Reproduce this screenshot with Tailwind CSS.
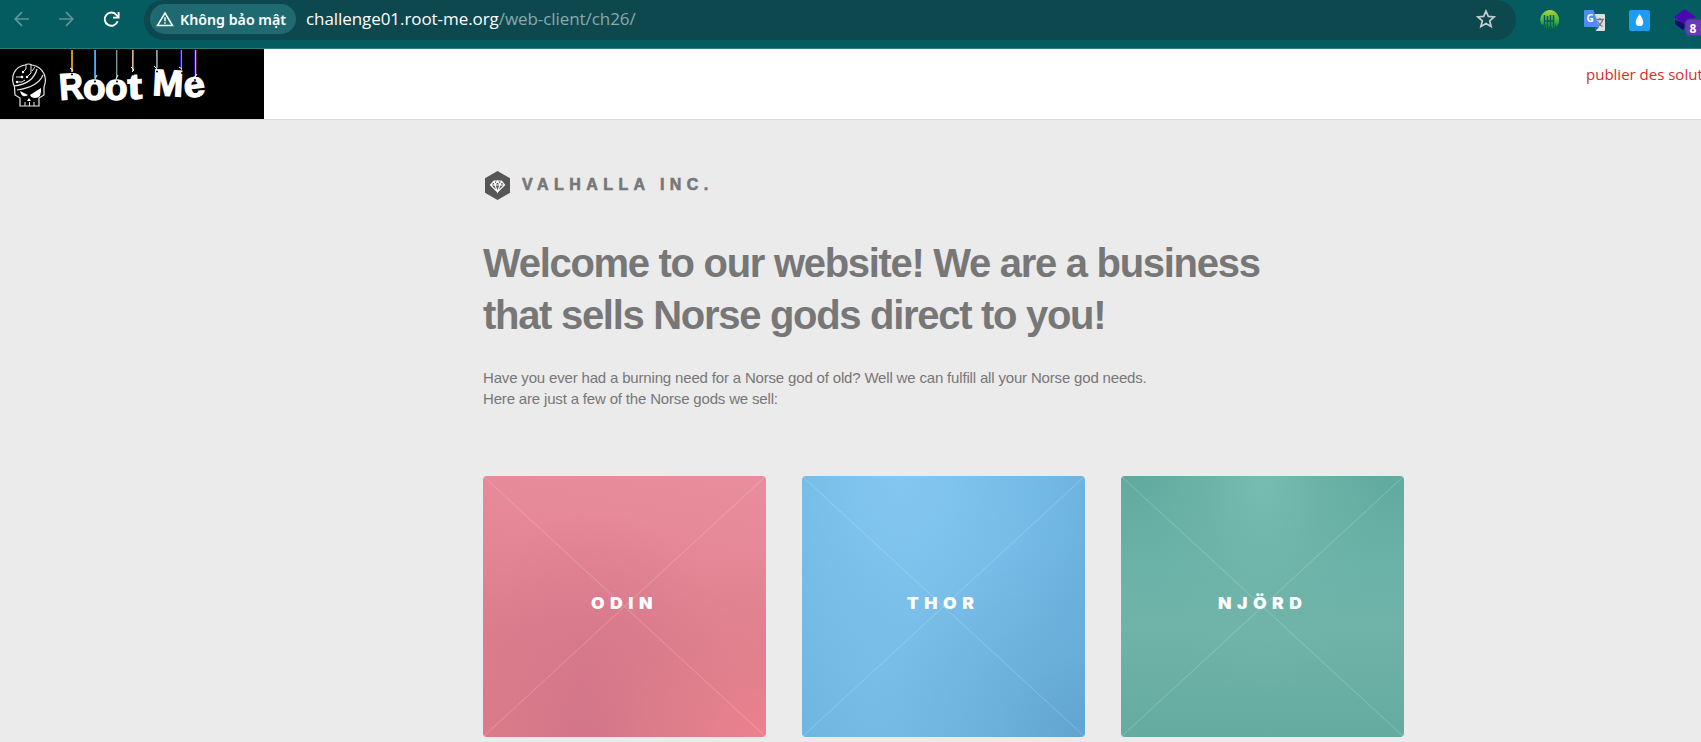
<!DOCTYPE html>
<html lang="vi">
<head>
<meta charset="utf-8">
<title>Valhalla Inc.</title>
<script src="https://cdn.jsdelivr.net/npm/@tailwindcss/browser@4"></script>
</head>
<body class="h-[742px] w-[1701px] overflow-hidden bg-[#ebebeb] font-['Liberation_Sans',sans-serif]">
<!-- Browser toolbar -->
<div class="flex h-[49px] w-full items-start overflow-hidden border-b border-[#33777c] bg-[#045c61]">
  <div class="flex h-[38px] w-[144px] shrink-0 items-center">
    <svg class="ml-[14px] h-4 w-4" viewBox="0 0 16 16" fill="none" stroke="#619396" stroke-width="1.7"><path d="M15 8H1.5M8 1.2 1.2 8 8 14.8"/></svg>
    <svg class="ml-[29px] h-4 w-4" viewBox="0 0 16 16" fill="none" stroke="#619396" stroke-width="1.7"><path d="M0 8h13.5M7 1.2 13.8 8 7 14.8"/></svg>
    <svg class="ml-[28px] h-[17px] w-[17px]" viewBox="0 0 17 17" fill="none" stroke="#fff" stroke-width="1.9"><path d="M14.6 10.2A6.6 6.6 0 1 1 13.6 4.2L15 6"/><path d="M15.6 1v5.6H10"/></svg>
  </div>
  <div class="flex h-10 w-[1372px] shrink-0 items-center rounded-r-[20px] rounded-l-[20px] bg-[#0e484f] pb-[2px] pl-[6px]">
    <div class="flex h-[30px] w-[146px] shrink-0 items-center rounded-full bg-[#1f6a70] pl-[6px]">
      <svg class="h-[16px] w-[18px]" viewBox="0 0 18 16" fill="none" stroke="#fff" stroke-width="1.5"><path d="M9 2 16.5 14.5h-15z"/><path d="M9 6.3v4M9 11.2v1.6"/></svg>
      <span class="ml-[6px] origin-left scale-x-[1.015] font-['Noto_Sans',sans-serif] text-[14px] font-semibold whitespace-nowrap text-white">Không bảo mật</span>
    </div>
    <div class="ml-[10px] font-['Open_Sans',sans-serif] text-[17px] tracking-[-0.07px] whitespace-nowrap text-white">challenge01.root-me.org<span class="text-[#8ba9ac]">/web-client/ch26/</span></div>
    <svg class="mr-[20px] ml-auto h-5 w-5" viewBox="0 0 20 20" fill="none" stroke="#c3cdcf" stroke-width="1.7"><path d="m10 2 2.3 5.4 5.9.5-4.5 3.9 1.4 5.7L10 14.5l-5.1 3 1.4-5.7L1.8 7.900l5.900-.5z"/></svg>
  </div>
  <div class="flex h-[40px] shrink-0 items-center">
    <svg class="ml-[23px] h-5 w-5" viewBox="0 0 20 20"><defs><linearGradient id="g" x2="0" y2="1"><stop stop-color="#b3d435"/><stop offset=".55" stop-color="#3db346"/><stop offset="1" stop-color="#087c38"/></linearGradient></defs><path fill="url(#g)" d="M10 0a10 10 0 0 1 8.500 15.500L17 17v-3l-2 4v-3l-2 4.500V16l-2 3.500V16l-2 3.500V16l-2 3V14l-2 4v-3l-2-1v1.500A10 10 0 0 1 10 0Z"/><path stroke="#045c61" stroke-width="1.5" d="M5.500 5v11M8.500 6v12M11.500 5v13M14.500 5v11M5 11h10"/></svg>
    <svg class="ml-[25px] h-[21px] w-[21px]" viewBox="0 0 21 21"><path fill="#dedede" d="M9 4h11q1 0 1 1v15q0 1-1 1h-8z"/><path stroke="#687b83" stroke-width="1.300" fill="none" d="M12 9.500h8M16 8v2M18.500 10q-1 4-5.500 6.500M13.500 11q1.500 3.500 5 5.500"/><path fill="#3456b8" d="m11 17 4 0-3.500 4z"/><path fill="#4f8df5" d="M1 0h8.500l5.500 17H1q-1 0-1-1V1q0-1 1-1Z"/><text x="2.500" y="12" font-size="10" font-weight="700" fill="#fff" font-family="Open Sans">G</text></svg>
    <svg class="ml-[24px] h-[21px] w-[21px]" viewBox="0 0 21 21"><rect width="21" height="21" rx="2" fill="#1c9df0"/><path fill="#fff" d="M10.500 4q3.700 5 3.700 8.200a3.700 3.900 0 0 1-7.400 0Q6.800 9 10.500 4Z"/></svg>
    <svg class="ml-[24px] h-[33px] w-7" viewBox="0 -2 28 33"><path fill="#1b0770" d="M1 14v4l8 6 4-6z"/><path fill="#4a08b4" d="M11 1 22 9 11 17 0 9z" transform="translate(0 2)"/><rect x="11" y="13" width="20" height="17" rx="5" fill="#6d36bd" stroke="#045c61" stroke-width="1"/><text x="15.500" y="26.500" font-size="12" font-weight="700" fill="#fff" font-family="Open Sans">8</text></svg>
  </div>
</div>
<!-- Site header -->
<header class="flex h-[71px] w-full justify-between overflow-hidden border-b border-[#dcdcdc] bg-white">
  <svg class="h-[70px] w-[264px] shrink-0 bg-black" viewBox="0 49 264 70" fill="none">
    <g stroke="#e8e8e8" stroke-width="1.200">
      <path d="M14.500 87C10 77 14 67 25 65q3.500-2 7 0C43 67 48 77 44 87v8l-5 3v8H20v-8l-5-3z"/>
      <path d="M14 86Q33 84 37 69M17 90Q38 87 43 75"/>
      <path stroke-width="1" d="M26 65v4l-3 3M31 65v8l-4 4M16 77h6M17 82h5l3-2M35 67l-3 4M25 102v4M29.500 102v4M34 102v4"/>
    </g>
    <path fill="#fff" d="m20 91 8 4q-6 4-8-4ZM30 95l11-7q1 10-6 10-4 0-5-3ZM27 101l2-3 2 3z"/>
    <g fill="#fff"><circle cx="22" cy="77" r="1.300"/><circle cx="17" cy="82" r="1.200"/><circle cx="23" cy="72" r="1.200"/><circle cx="27" cy="77" r="1.200"/></g>
    <g stroke-width="1">
      <path stroke="#8099a0" d="M71.500 50v22M94.500 50v28M116.500 50v28M132.500 50v22M156.500 50v20M181.500 50v20M194.500 50v27"/>
      <path stroke="#d79610" d="M72.500 50v20M95.500 50v27"/><path stroke="#348ed0" d="M94.500 50v27M133.500 50v20M157.500 50v18"/><path stroke="#652025" d="M117.500 50v27M196.500 50v26"/><path stroke="#d5b19c" d="M132.500 50v20M195.500 50v27"/><path stroke="#1b10bc" d="M180.500 50v19M194.500 50v26"/>
    </g>
    <g fill="#fff" stroke="#fff" stroke-width="1.300" font-family="Liberation Sans" font-weight="700">
      <text font-size="37" transform="translate(60 100) rotate(-4) scale(.9 1)">R</text>
      <text font-size="36" transform="translate(83 100) scale(1.030 1)">o</text>
      <text font-size="36" transform="translate(105 100) scale(1.030 1)">o</text>
      <text font-size="36" transform="translate(128 99) rotate(-2) scale(1.200 1)">t</text>
      <text font-size="37" transform="translate(152 95) rotate(3)">M</text>
      <text font-size="36" transform="translate(185 98) rotate(-7) scale(1.060 1)">e</text>
    </g>
    <g fill="#000"><circle cx="72" cy="74.500" r="1"/><circle cx="95" cy="81.500" r="1"/><circle cx="117" cy="81.500" r="1"/><circle cx="133" cy="74.500" r="1"/><circle cx="157" cy="71.500" r="1"/><circle cx="182" cy="73" r="1"/><circle cx="195" cy="80" r="1"/></g>
    <path stroke="#fff" d="m70 68 3 2-1 2M97 75l-2 4M118 75l-2 4M131 67l3 3-2 2M154 66l3 3-1 2M179 67l3 2M197 74l-2 3"/>
  </svg>
  <div class="w-[115px] shrink-0 overflow-hidden pt-[14px] font-['Open_Sans',sans-serif] text-[15px] leading-[22px] whitespace-nowrap text-[#d92b2b]">publier des solutions</div>
</header>
<!-- Page content -->
<main class="ml-[483px] w-[921px]">
  <div class="flex h-[29px] translate-y-[51px] items-center">
    <svg class="ml-[2px] h-[29px] w-[25px]" viewBox="0 0 25 29"><path fill="#565656" d="M12.500 0 25 7.200v14.600L12.500 29 0 21.800V7.200z"/><path fill="none" stroke="#fff" stroke-width="1.200" d="M9 10h7.500l3 4-7 7-7-7zM5.500 14h14M9 10l1 4 2.500 7 2.500-7 1.500-4M10 14l2.500-4 2.500 4"/></svg>
    <span class="-mt-[2px] ml-[12px] text-[16px] leading-5 font-bold tracking-[5.45px] whitespace-nowrap text-[#777] [-webkit-text-stroke:0.6px_#777]">VALHALLA INC.</span>
  </div>
  <h1 class="mt-[88px] text-[40px] leading-[52px] font-bold tracking-[-1.3px] whitespace-nowrap text-[#777]">Welcome to our website! We are a business<br>that sells Norse gods direct to you!</h1>
  <p class="mt-[26px] text-[15px] leading-[21px] tracking-[-0.17px] whitespace-nowrap text-[#777]">Have you ever had a burning need for a Norse god of old? Well we can fulfill all your Norse god needs.<br>Here are just a few of the Norse gods we sell:</p>
  <div class="mt-[67px] grid grid-cols-3 gap-9 text-[16px] font-black text-white">
    <div class="grid h-[261px] place-items-center overflow-hidden rounded-[4px] bg-[radial-gradient(ellipse_at_100%_100%,#eb828d_0%,#e3808c88_22%,transparent_48%),radial-gradient(ellipse_at_40%_100%,#d17589_0%,#d1758988_25%,transparent_62%),linear-gradient(190deg,#e98e9e_0%,#e58796_30%,#dd7e8e_65%,#df7c89_100%)]">
      <svg class="col-start-1 row-start-1 h-full w-full" viewBox="0 0 283 261" stroke="#fff" stroke-opacity=".22"><path d="m0 0 283 261M283 0 0 261"/></svg>
      <span class="col-start-1 row-start-1 -mt-[7px] scale-x-110 font-['Inter',sans-serif] tracking-[5px]">ODIN</span>
    </div>
    <div class="grid h-[261px] place-items-center overflow-hidden rounded-[4px] bg-[radial-gradient(ellipse_at_100%_100%,#61a4cf_0%,#66aad488_22%,transparent_55%),radial-gradient(ellipse_at_35%_0%,#84c7f1_0%,#7bc1ec99_40%,transparent_75%),linear-gradient(90deg,#6fb6e1_0%,#76bce7_35%,#74bae6_60%,#6bb2df_100%)]">
      <svg class="col-start-1 row-start-1 h-full w-full" viewBox="0 0 283 261" stroke="#fff" stroke-opacity=".22"><path d="m0 0 283 261M283 0 0 261"/></svg>
      <span class="col-start-1 row-start-1 -mt-[7px] scale-x-110 font-['Inter',sans-serif] tracking-[5px]">THOR</span>
    </div>
    <div class="grid h-[261px] place-items-center overflow-hidden rounded-[4px] bg-[radial-gradient(ellipse_at_50%_0%,#77bdb1_0%,#70b5aaaa_30%,transparent_60%),linear-gradient(180deg,#61aa9f_0%,#6bb2a8_35%,#70b3a8_58%,#65aba0_100%)]">
      <svg class="col-start-1 row-start-1 h-full w-full" viewBox="0 0 283 261" stroke="#fff" stroke-opacity=".22"><path d="m0 0 283 261M283 0 0 261"/></svg>
      <span class="col-start-1 row-start-1 -mt-[7px] scale-x-110 font-['Inter',sans-serif] tracking-[5px]">NJÖRD</span>
    </div>
  </div>
</main>
</body>
</html>
